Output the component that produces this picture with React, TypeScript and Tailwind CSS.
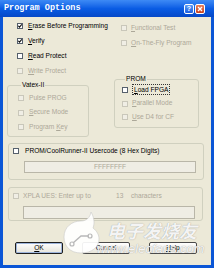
import type { ReactNode } from "react";
import clsx from "clsx";

const ui = { fontFamily: '"Liberation Sans", Arial, sans-serif' };

function Box({ checked, disabled }: { checked?: boolean; disabled?: boolean }) {
  return (
    <span
      className={clsx(
        "flex h-[6px] w-[6px] shrink-0 items-center justify-center border",
        disabled ? "border-[#c9c7ba] bg-[#f0eee5]" : "border-[#56606c] bg-white"
      )}
    >
      {checked && (
        <svg viewBox="0 0 4 4" className="h-[4px] w-[4px]">
          <path d="M0.3 1.8 L1.5 3.2 L3.8 0.4" stroke="#111" strokeWidth="1.1" fill="none" />
        </svg>
      )}
    </span>
  );
}

function Check({
  children,
  checked,
  disabled,
  gap = "gap-[5px]",
}: {
  children: ReactNode;
  checked?: boolean;
  disabled?: boolean;
  gap?: string;
}) {
  return (
    <div className={clsx("flex h-[12px] items-center", gap)}>
      <Box checked={checked} disabled={disabled} />
      <span
        className={clsx(
          "whitespace-nowrap text-[6.6px] leading-none",
          disabled ? "text-[#aca899]" : "text-black"
        )}
      >
        {children}
      </span>
    </div>
  );
}

function Btn({ children, def }: { children: ReactNode; def?: boolean }) {
  return (
    <button
      className={clsx(
        "flex h-[12px] w-[48px] items-center justify-center rounded-[2px] bg-gradient-to-b from-[#ffffff] to-[#e6e4da] text-[6.6px] text-black",
        def ? "border border-[#1e1e1e] shadow-[inset_0_0_0_1px_#9fb6dc]" : "border border-[#4a4a4a]"
      )}
    >
      {children}
    </button>
  );
}

export default function App() {
  return (
    <div className="flex h-[268px] w-[214px] flex-col bg-[#0b56d6]" style={ui}>
      <div className="flex h-[17px] items-center bg-gradient-to-b from-[#3d8af5] via-[#0a5ce4] to-[#0648c7] pl-[4px] pr-[9px]">
        <span
          className="flex-1 text-[8.5px] font-bold text-white"
          style={{ fontFamily: '"Liberation Mono", "DejaVu Sans Mono", monospace' }}
        >
          Program Options
        </span>
        <div className="flex gap-[1px]">
          <span className="flex h-[10px] w-[10px] items-center justify-center rounded-[2px] border border-white bg-gradient-to-b from-[#5b9bf7] to-[#1f5fe0] text-[7px] font-bold leading-none text-white">
            ?
          </span>
          <span className="flex h-[10px] w-[10px] items-center justify-center rounded-[2px] border border-white bg-gradient-to-b from-[#e8805c] to-[#c8401c]">
            <svg viewBox="0 0 6 6" className="h-[6px] w-[6px]">
              <path d="M1 1 L5 5 M5 1 L1 5" stroke="#fff" strokeWidth="1.3" />
            </svg>
          </span>
        </div>
      </div>

      <div className="relative mx-[3px] mb-[3px] flex flex-1 flex-col bg-[#ece9d8] pl-[4px]">
        <div className="flex pt-[3px]">
          <div className="flex w-[82px] flex-col">
            <div className="flex flex-col gap-[3px] pl-[10px]">
              <Check checked>
                <u>E</u>rase Before Programming
              </Check>
              <Check checked>
                <u>V</u>erify
              </Check>
              <Check>
                <u>R</u>ead Protect
              </Check>
              <Check disabled>
                <u>W</u>rite Protect
              </Check>
            </div>
            <fieldset className="mt-[4px] rounded-[3px] border border-[#d0d0bf] pb-[3px] pl-[10px] pt-[3px]">
              <legend className="ml-[3px] px-[1px] text-[6.6px] leading-[8px] text-black">Vatex-II</legend>
              <div className="flex flex-col gap-[2.5px]">
                <Check disabled>Pulse PROG</Check>
                <Check disabled>
                  <u>S</u>ecure Mode
                </Check>
                <Check disabled>
                  Program <u>K</u>ey
                </Check>
              </div>
            </fieldset>
          </div>

          <div className="ml-[25px] flex w-[85px] flex-col pt-[2px]">
            <div className="flex flex-col gap-[3px] pl-[7px]">
              <Check disabled gap="gap-[4px]">
                <u>F</u>unctional Test
              </Check>
              <Check disabled gap="gap-[4px]">
                <u>O</u>n-The-Fly Program
              </Check>
            </div>
            <fieldset className="mt-[26px] rounded-[3px] border border-[#d0d0bf] pb-[4px] pl-[7px] pt-[1px]">
              <legend className="ml-[3px] px-[1px] text-[6.6px] leading-[8px] text-black">PROM</legend>
              <div className="flex flex-col gap-[1.5px]">
                <Check gap="gap-[4px]">
                  <span className="border border-dotted border-[#333] px-[1px] py-[1px]">
                    <u>L</u>oad FPGA
                  </span>
                </Check>
                <Check disabled gap="gap-[4px]">
                  <u>P</u>arallel Mode
                </Check>
                <Check disabled gap="gap-[4px]">
                  <u>U</u>se D4 for CF
                </Check>
              </div>
            </fieldset>
          </div>
        </div>

        <div className="ml-[1px] mt-[6px] w-[196px] rounded-[3px] border border-[#d0d0bf] pb-[6px] pl-[4px] pt-[1px]">
          <Check gap="gap-[6px]">PROM/CoolRunner-II Usercode (8 Hex Digits)</Check>
          <div className="ml-[11px] mt-[4px] flex h-[12px] w-[172px] items-center justify-center border border-[#b9b6a8] bg-[#efede4] text-[6.6px] text-[#aca899]">
            FFFFFFFF
          </div>
        </div>

        <div className="ml-[1px] mt-[7px] w-[195px] rounded-[3px] border border-[#d0d0bf] pb-[1px] pl-[4px] pt-[2px]">
          <div className="flex h-[12px] items-center">
            <Box disabled />
            <span className="ml-[4px] w-[93px] text-[6.6px] text-[#aca899]">XPLA UES: Enter up to</span>
            <span className="w-[15px] text-[6.6px] text-[#aca899]">13</span>
            <span className="text-[6.6px] text-[#aca899]">characters</span>
          </div>
          <div className="ml-[10px] mt-[4px] h-[13px] w-[172px] border border-[#b9b6a8] bg-[#efede4]" />
        </div>

        <div className="ml-[8px] mt-[21px] flex gap-[19px]">
          <Btn def>
            <u>O</u>K
          </Btn>
          <Btn>Cancel</Btn>
          <Btn>
            <u>H</u>elp
          </Btn>
        </div>

        <div className="pointer-events-none absolute left-[58px] top-[194px] flex items-start">
          <svg viewBox="0 0 40 44" className="h-[44px] w-[40px]">
            <path
              d="M20 42 C9 42 3 35 3 26 C3 16 11 10 20 10 C25 10 29 7 30 1 C33 6 34 12 32 17 C36 20 38 24 38 28 C38 36 31 42 20 42 Z"
              fill="#ffffff"
              fillOpacity="0.92"
              stroke="#c9c9c9"
              strokeWidth="0.6"
            />
            <path d="M12 32 L20 25 L28 25" stroke="#b8b8b8" strokeWidth="1.4" fill="none" />
            <circle cx="11" cy="33" r="2" fill="none" stroke="#b8b8b8" strokeWidth="1.2" />
            <circle cx="29" cy="25" r="2" fill="none" stroke="#b8b8b8" strokeWidth="1.2" />
          </svg>
          <div className="ml-[6px] flex flex-col">
            <span
              className="mt-[10px] text-[18px] font-bold italic leading-[18px] text-white/90 [text-shadow:0_0_1px_#8a8a8a]"
              style={{ fontFamily: '"Noto Sans CJK SC", sans-serif' }}
            >
              电子发烧友
            </span>
            <span className="-ml-[10px] mt-[3px] text-[13px] italic leading-[13px] text-white/90 [text-shadow:0_0_1px_#8a8a8a]">
              www.elecfans.com
            </span>
          </div>
        </div>
      </div>
    </div>
  );
}
